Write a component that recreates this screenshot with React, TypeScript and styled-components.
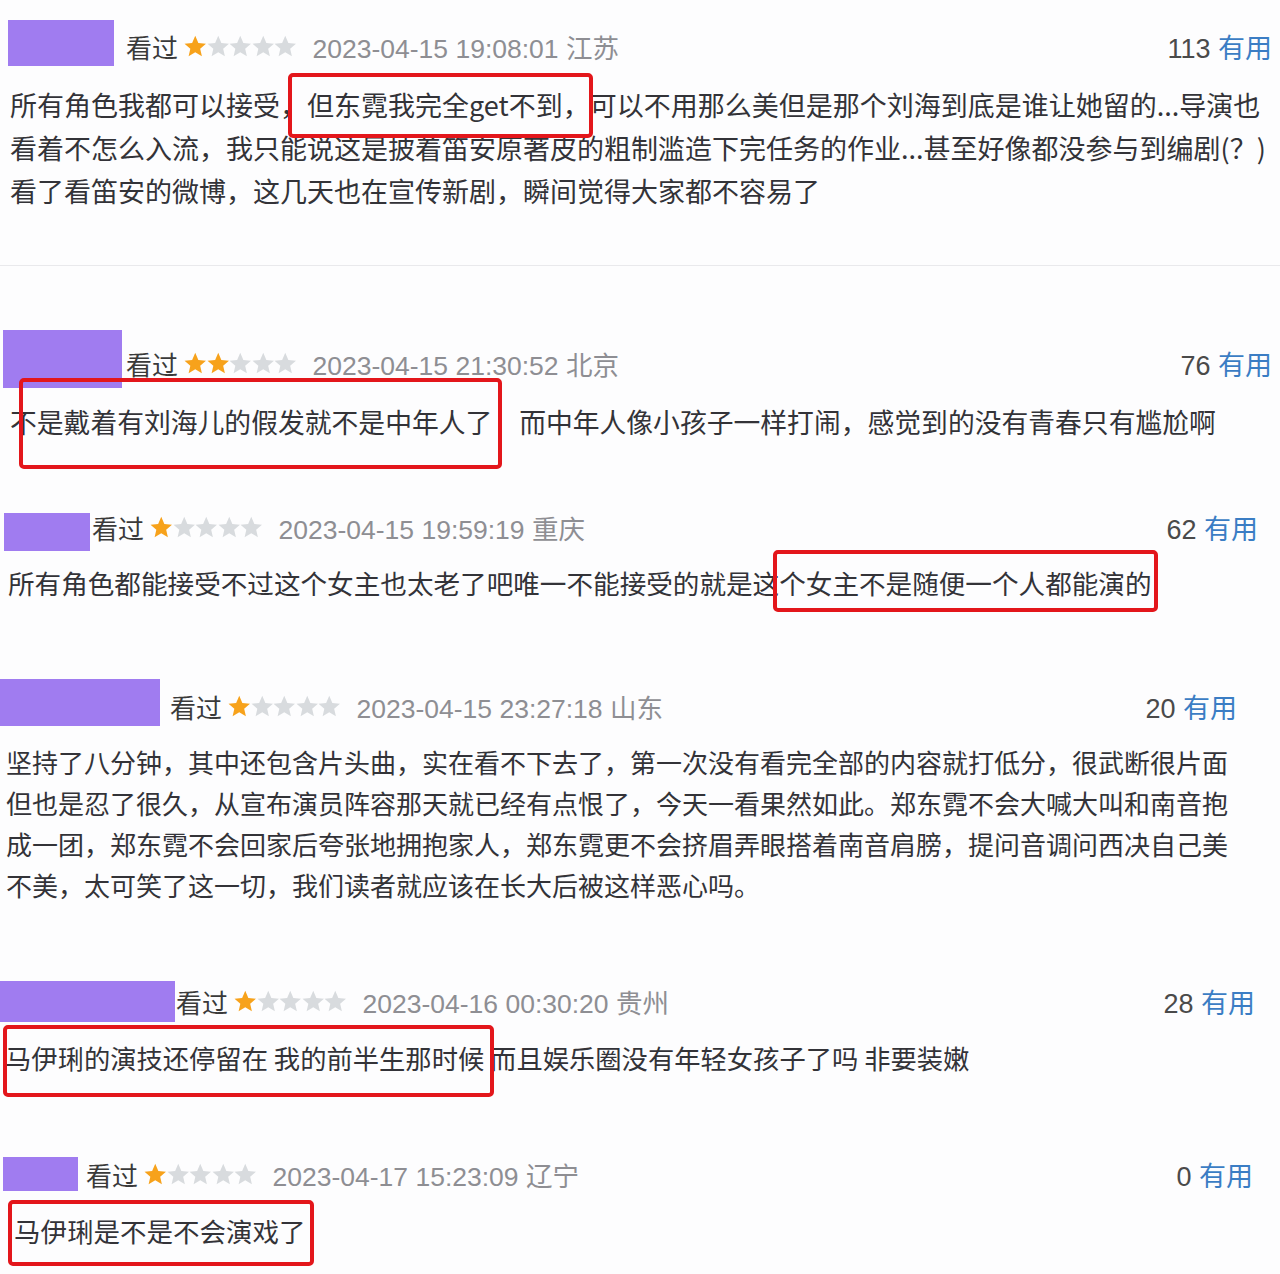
import React from 'react';
import styled, {createGlobalStyle} from 'styled-components';

const GlobalStyle = createGlobalStyle`
  html, body {
    margin: 0;
    padding: 0;
    background: #fdfdfe;
  }
  body {
    font-family: "Noto Sans CJK SC", "Noto Sans", sans-serif;
  }
`;

interface Box {
  top: number;
  left: number;
  width: number;
  height: number;
}

interface Review {
  height: number;
  pt: number;
  divider?: boolean;
  avatarLeft: number;
  avatarW: number;
  avatarH: number;
  avatarTop: number;
  avatarGap: number;
  stars: number;
  date: string;
  useful: number;
  pr: number;
  bodyLeft: number;
  bodyTop: number;
  bodySize: number;
  lineHeight: number;
  lines: string[];
  boxes: Box[];
}

const reviews: Review[] = [
  {
    height: 266,
    pt: 21,
    divider: true,
    avatarLeft: 8,
    avatarW: 106,
    avatarH: 46,
    avatarTop: -1,
    avatarGap: 12,
    stars: 1,
    date: '2023-04-15 19:08:01 江苏',
    useful: 113,
    pr: 8,
    bodyLeft: 10,
    bodyTop: 12,
    bodySize: 27,
    lineHeight: 43,
    lines: [
      '所有角色我都可以接受，但东霓我完全get不到，可以不用那么美但是那个刘海到底是谁让她留的...导演也',
      '看着不怎么入流，我只能说这是披着笛安原著皮的粗制滥造下完任务的作业...甚至好像都没参与到编剧(？)',
      '看了看笛安的微博，这几天也在宣传新剧，瞬间觉得大家都不容易了',
    ],
    boxes: [{top: 73, left: 288, width: 305, height: 65}],
  },
  {
    height: 204,
    pt: 72,
    avatarLeft: 3,
    avatarW: 119,
    avatarH: 58,
    avatarTop: -8,
    avatarGap: 4,
    stars: 2,
    date: '2023-04-15 21:30:52 北京',
    useful: 76,
    pr: 8,
    bodyLeft: 10,
    bodyTop: 13,
    bodySize: 26.8,
    lineHeight: 42,
    lines: ['不是戴着有刘海儿的假发就不是中年人了　而中年人像小孩子一样打闹，感觉到的没有青春只有尴尬啊'],
    boxes: [{top: 112, left: 19, width: 483, height: 91}],
  },
  {
    height: 170,
    pt: 32,
    avatarLeft: 4,
    avatarW: 86,
    avatarH: 38,
    avatarTop: 11,
    avatarGap: 2,
    stars: 1,
    date: '2023-04-15 19:59:19 重庆',
    useful: 62,
    pr: 22,
    bodyLeft: 8,
    bodyTop: 10,
    bodySize: 26.6,
    lineHeight: 42,
    lines: ['所有角色都能接受不过这个女主也太老了吧唯一不能接受的就是这个女主不是随便一个人都能演的'],
    boxes: [{top: 80, left: 773, width: 385, height: 62}],
  },
  {
    height: 300,
    pt: 41,
    avatarLeft: 0,
    avatarW: 160,
    avatarH: 47,
    avatarTop: -2,
    avatarGap: 10,
    stars: 1,
    date: '2023-04-15 23:27:18 山东',
    useful: 20,
    pr: 43,
    bodyLeft: 6,
    bodyTop: 10,
    bodySize: 26,
    lineHeight: 41,
    lines: [
      '坚持了八分钟，其中还包含片头曲，实在看不下去了，第一次没有看完全部的内容就打低分，很武断很片面',
      '但也是忍了很久，从宣布演员阵容那天就已经有点恨了，今天一看果然如此。郑东霓不会大喊大叫和南音抱',
      '成一团，郑东霓不会回家后夸张地拥抱家人，郑东霓更不会挤眉弄眼搭着南音肩膀，提问音调问西决自己美',
      '不美，太可笑了这一切，我们读者就应该在长大后被这样恶心吗。',
    ],
    boxes: [],
  },
  {
    height: 180,
    pt: 36,
    avatarLeft: 0,
    avatarW: 175,
    avatarH: 41,
    avatarTop: 5,
    avatarGap: 1,
    stars: 1,
    date: '2023-04-16 00:30:20 贵州',
    useful: 28,
    pr: 25,
    bodyLeft: 5,
    bodyTop: 11,
    bodySize: 26.3,
    lineHeight: 42,
    lines: ['马伊琍的演技还停留在 我的前半生那时候 而且娱乐圈没有年轻女孩子了吗 非要装嫩'],
    boxes: [{top: 85, left: 3, width: 491, height: 72}],
  },
  {
    height: 154,
    pt: 29,
    avatarLeft: 3,
    avatarW: 75,
    avatarH: 34,
    avatarTop: 8,
    avatarGap: 8,
    stars: 1,
    date: '2023-04-17 15:23:09 辽宁',
    useful: 0,
    pr: 27,
    bodyLeft: 14,
    bodyTop: 11,
    bodySize: 26.5,
    lineHeight: 42,
    lines: ['马伊琍是不是不会演戏了'],
    boxes: [{top: 80, left: 8, width: 306, height: 66}],
  },
];

const Page = styled.div`
  width: 1280px;
  height: 1274px;
  overflow: hidden;
  display: flex;
  flex-direction: column;
  background: #fdfdfe;
`;

const Block = styled.div<{$h: number; $pt: number; $divider?: boolean}>`
  position: relative;
  box-sizing: border-box;
  height: ${p => p.$h}px;
  padding-top: ${p => p.$pt}px;
  border-bottom: ${p => (p.$divider ? '1px solid #e9e9ec' : 'none')};
  flex-shrink: 0;
`;

const Header = styled.div<{$left: number; $right: number}>`
  display: flex;
  align-items: center;
  height: 50px;
  padding-left: ${p => p.$left}px;
  padding-right: ${p => p.$right}px;
`;

const Avatar = styled.div<{$w: number; $h: number; $top: number; $gap: number}>`
  align-self: flex-start;
  width: ${p => p.$w}px;
  height: ${p => p.$h}px;
  margin-top: ${p => p.$top}px;
  margin-right: ${p => p.$gap}px;
  background: #a07cf0;
  flex-shrink: 0;
`;

const Seen = styled.span`
  font-size: 26px;
  color: #3a3a3a;
  margin-right: 6px;
  white-space: nowrap;
`;

const StarRow = styled.span`
  display: inline-flex;
  margin-right: 16px;
`;

const DateText = styled.span`
  font-family: "Liberation Sans", "Noto Sans CJK SC", sans-serif;
  font-size: 26.5px;
  color: #8e8e93;
  white-space: nowrap;
`;

const Useful = styled.span`
  margin-left: auto;
  font-family: "Liberation Sans", "Noto Sans CJK SC", sans-serif;
  font-size: 27px;
  color: #4a4a4a;
  white-space: nowrap;
`;

const UsefulLink = styled.span`
  color: #3b7dc4;
  font-family: "Noto Sans CJK SC", sans-serif;
`;

const Body = styled.div<{$left: number; $top: number; $size: number; $lh: number}>`
  padding-left: ${p => p.$left}px;
  margin-top: ${p => p.$top}px;
  font-size: ${p => p.$size}px;
  line-height: ${p => p.$lh}px;
  color: #333338;
`;

const Line = styled.div`
  white-space: pre;
`;

const Mark = styled.div`
  position: absolute;
  box-sizing: border-box;
  border: 4px solid #e3161b;
  border-radius: 5px;
  pointer-events: none;
`;

const Star = ({on}: {on: boolean}) => (
  <svg width="22.5" height="22" viewBox="1.5 1.5 21 20">
    <polygon
      points="12,2 14.9,8.6 22,9.3 16.6,14 18.2,21 12,17.3 5.8,21 7.4,14 2,9.3 9.1,8.6"
      fill={on ? '#f7a21b' : '#d8dbde'}
    />
  </svg>
);

const App = () => {
  return (
    <Page>
      <GlobalStyle />
      {reviews.map((r, i) => (
        <Block key={i} $h={r.height} $pt={r.pt} $divider={r.divider}>
          <Header $left={r.avatarLeft} $right={r.pr}>
            <Avatar $w={r.avatarW} $h={r.avatarH} $top={r.avatarTop} $gap={r.avatarGap} />
            <Seen>看过</Seen>
            <StarRow>
              {[0, 1, 2, 3, 4].map(n => (
                <Star key={n} on={n < r.stars} />
              ))}
            </StarRow>
            <DateText>{r.date}</DateText>
            <Useful>
              {r.useful} <UsefulLink>有用</UsefulLink>
            </Useful>
          </Header>
          <Body $left={r.bodyLeft} $top={r.bodyTop} $size={r.bodySize} $lh={r.lineHeight}>
            {r.lines.map((l, j) => (
              <Line key={j}>{l}</Line>
            ))}
          </Body>
          {r.boxes.map((b, k) => (
            <Mark
              key={k}
              style={{top: b.top, left: b.left, width: b.width, height: b.height}}
            />
          ))}
        </Block>
      ))}
    </Page>
  );
};

export default App;
